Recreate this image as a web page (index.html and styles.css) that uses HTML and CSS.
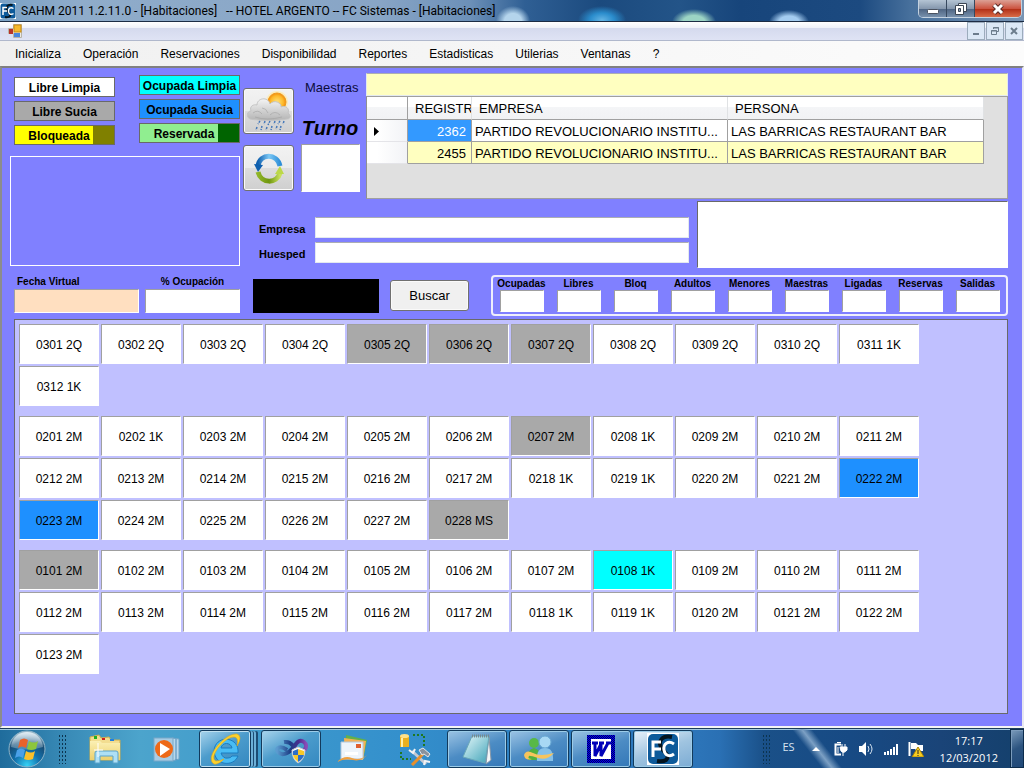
FILE: index.html
```html
<!DOCTYPE html>
<html lang="es">
<head>
<meta charset="utf-8">
<title>SAHM 2011 - Habitaciones</title>
<link rel="stylesheet" href="styles.css">
</head>
<body>
<svg class="defs" width="0" height="0" aria-hidden="true">
  <defs>
    <linearGradient id="blueArrow" x1="0" y1="0" x2="1" y2="0"><stop offset="0" stop-color="#0f5fae"/><stop offset=".5" stop-color="#7cc8f5"/><stop offset="1" stop-color="#2f8fd8"/></linearGradient>
    <linearGradient id="greenArrow" x1="0" y1="0" x2="1" y2="0"><stop offset="0" stop-color="#8fb526"/><stop offset=".5" stop-color="#6f9610"/><stop offset="1" stop-color="#c8e05a"/></linearGradient>
    <radialGradient id="sun"><stop offset="0" stop-color="#ffe27a"/><stop offset=".7" stop-color="#fdb92a"/><stop offset="1" stop-color="#f08a10"/></radialGradient>
    <linearGradient id="cloud" x1="0" y1="0" x2="0" y2="1"><stop offset="0" stop-color="#f4f4f4"/><stop offset="1" stop-color="#b4b4b4"/></linearGradient>
    <radialGradient id="orb" cx=".5" cy=".95" r=".9"><stop offset="0" stop-color="#35d2f5"/><stop offset=".4" stop-color="#1272ae"/><stop offset=".75" stop-color="#174c74"/><stop offset="1" stop-color="#9fbccd"/></radialGradient>
    <linearGradient id="shine" x1="0" y1="0" x2="0" y2="1"><stop offset="0" stop-color="#e8f2f8" stop-opacity=".9"/><stop offset="1" stop-color="#b9d2e0" stop-opacity=".3"/></linearGradient>
    <linearGradient id="folder" x1="0" y1="0" x2="0" y2="1"><stop offset="0" stop-color="#fbf0b4"/><stop offset="1" stop-color="#ecd06c"/></linearGradient>
    <linearGradient id="infinity" x1="0" y1="0" x2="1" y2="0"><stop offset="0" stop-color="#5b9bd0"/><stop offset=".45" stop-color="#1d3f86"/><stop offset=".75" stop-color="#4a2c8e"/><stop offset="1" stop-color="#8a4bb8"/></linearGradient>
    <linearGradient id="note" x1="0" y1="0" x2="1" y2="1"><stop offset="0" stop-color="#e6f8fa"/><stop offset="1" stop-color="#3fa3b8"/></linearGradient>
    <pattern id="dither" width="2" height="2" patternUnits="userSpaceOnUse"><rect width="2" height="2" fill="#0000f0"/><rect width="1" height="1" fill="#000060"/><rect x="1" y="1" width="1" height="1" fill="#000060"/></pattern>
    <symbol id="fc" viewBox="0 0 32 32"><rect width="32" height="32" fill="#fff"/><rect x="1" y="1" width="30" height="30" rx="5" fill="#0d5a9a"/><path d="M25 4C15 2 11 8 14 14s10 8 5 13q-3 2-9 1" fill="none" stroke="#04141f" stroke-width="4"/><path d="M6 24V9h8M6 16h8M27 11c-6-4-11 0-10 6s6 7 10 4" fill="none" stroke="#fff" stroke-width="3"/></symbol>
  </defs>
</svg>

<header class="titlebar">
  <svg class="title-icon" viewBox="0 0 32 32"><use href="#fc"/></svg>
  <h1 class="title">SAHM 2011 1.2.11.0 - [Habitaciones]   -- HOTEL ARGENTO -- FC Sistemas - [Habitaciones]</h1>
  <div class="window-buttons">
    <button class="win-btn" aria-label="Minimizar"><svg width="14" height="14" viewBox="0 0 14 14"><rect x="1.500" y="7.500" width="11" height="4" rx="1" fill="#fff" stroke="#4a5260"/></svg></button>
    <button class="win-btn" aria-label="Restaurar"><svg width="14" height="14" viewBox="0 0 14 14"><path d="M4.500 1.500h8v8h-8z" fill="#fff" stroke="#3c4654"/><path d="M1.500 3.500h8v9h-8z" fill="#fff" stroke="#3c4654"/><path d="M4.500 6.500h2v3h-2z" fill="#8fa2b8" stroke="#3c4654"/></svg></button>
    <button class="win-btn win-close" aria-label="Cerrar"><svg width="14" height="14" viewBox="0 0 14 14"><path d="M3 3l8 8M11 3l-8 8" stroke="#5a2a26" stroke-width="5"/><path d="M3 3l8 8M11 3l-8 8" stroke="#fff" stroke-width="3"/></svg></button>
  </div>
</header>

<div class="mdi-bar">
  <svg class="mdi-icon" width="14" height="14" viewBox="0 0 14 14"><path d="M.5 4.500h5V.5h8v13h-8v-4h-5z" fill="#eceae4" stroke="#b8b4a8"/><rect x="1" y="5" width="4" height="5" fill="#b83428"/><rect x="6" y="1" width="7" height="7" fill="#f5b92c" stroke="#c98a10"/><rect x="6" y="9" width="6" height="4" fill="#4a86dc"/></svg>
  <div class="mdi-buttons">
    <button class="mdi-btn" aria-label="Minimizar ventana"><svg width="10" height="10" viewBox="0 0 10 10"><path d="M2 8h6" stroke="#6c7c8c" stroke-width="2"/></svg></button>
    <button class="mdi-btn" aria-label="Restaurar ventana"><svg width="10" height="10" viewBox="0 0 10 10"><path d="M3.500 3V1.500h5v4H7M3 2h6M1.500 4.500h5v4h-5zM1 5h6" fill="none" stroke="#6c7c8c"/></svg></button>
    <button class="mdi-btn" aria-label="Cerrar ventana"><svg width="10" height="10" viewBox="0 0 10 10"><path d="M2 2l6 6M8 2L2 8" stroke="#6c7c8c" stroke-width="2"/></svg></button>
  </div>
</div>

<nav class="menu">
  <button>Inicializa</button><button>Operación</button><button>Reservaciones</button><button>Disponibilidad</button><button>Reportes</button><button>Estadisticas</button><button>Utilerias</button><button>Ventanas</button><button>?</button>
</nav>

<main class="workspace">
  <section class="top">
    <div class="left">
      <div class="legend">
        <div class="legend-col legend-first">
          <div class="key clean">Libre Limpia</div>
          <div class="key dirty">Libre Sucia</div>
          <div class="key blocked"><span>Bloqueada</span><i></i></div>
        </div>
        <div class="legend-col">
          <div class="key busy-clean">Ocupada Limpia</div>
          <div class="key busy-dirty">Ocupada Sucia</div>
          <div class="key reserved"><span>Reservada</span><i></i></div>
        </div>
      </div>
      <div class="frame"></div>
    </div>

    <div class="right">
      <div class="right-upper">
        <div class="tools">
          <button class="tool" aria-label="Clima"><svg width="46" height="42" viewBox="0 0 46 42"><circle cx="31" cy="12" r="11" fill="#ffe9a8" opacity=".7"/><circle cx="31" cy="12" r="9" fill="url(#sun)" stroke="#f09a1c"/><path d="M4 29c-4-2-3-8 1-8-2-5 3-7 6-6 0-7 11-9 13-1 4-5 12-1 11 3 5-2 9 2 7 6 4 3 2 6-1 6-12 2-25 2-37 0z" fill="url(#cloud)" stroke="#c4c4c4"/><path d="M7 23q5-4 9 1M16 18q4 0 6 5M24 25q5-5 10 0M9 27q12 4 27 0" fill="none" stroke="#a2a2a2" opacity=".6"/><path d="M14 31l-2 3M19 31l-1 3M24 31l-2 4M29 31l-1 3M34 31l-2 3M38 31l-1 3M11 37l-1 3M16 36l-1 4M21 37l-1 3M26 36l-1 4M31 36l-1 3M35 36l-1 4" stroke="#4477b8" stroke-width="1.500" stroke-dasharray="2 1"/></svg></button>
          <button class="tool" aria-label="Actualizar"><svg width="34" height="34" viewBox="0 0 34 34"><path d="M6 15C8 2 25 2 28 15" fill="none" stroke="url(#blueArrow)" stroke-width="5"/><path d="M2 13l9 1-5 7z" fill="#0f5fae"/><path d="M6 21c3 12 19 12 22 1" fill="none" stroke="url(#greenArrow)" stroke-width="5"/><path d="M23 23l5-8 4 8z" fill="#bcd848"/></svg></button>
        </div>
        <div class="shift">
          <label class="maestras" for="maestras">Maestras</label>
          <label class="turno" for="turno">Turno</label>
          <input id="turno" class="sunken turno-box">
        </div>
        <div class="data">
          <input id="maestras" class="filter">
          <div class="grid-view">
            <table>
              <colgroup><col class="c-mark"><col class="c-reg"><col class="c-emp"><col class="c-per"></colgroup>
              <thead><tr><th></th><th>REGISTR</th><th>EMPRESA</th><th>PERSONA</th></tr></thead>
              <tbody>
                <tr><td class="mark"><svg width="5" height="9" viewBox="0 0 5 9"><path d="M0 0l5 4.500L0 9z"/></svg></td><td class="num selected">2362</td><td>PARTIDO REVOLUCIONARIO INSTITU...</td><td>LAS BARRICAS RESTAURANT BAR</td></tr>
                <tr class="alt"><td class="mark"></td><td class="num">2455</td><td>PARTIDO REVOLUCIONARIO INSTITU...</td><td>LAS BARRICAS RESTAURANT BAR</td></tr>
              </tbody>
            </table>
          </div>
        </div>
      </div>
      <div class="right-lower">
        <div class="guest">
          <label for="empresa">Empresa</label><input id="empresa">
          <label for="huesped">Huesped</label><input id="huesped">
        </div>
        <textarea class="notes" aria-label="Notas"></textarea>
      </div>
    </div>
  </section>

  <section class="status">
    <div class="field date"><label for="fecha">Fecha Virtual</label><input id="fecha" class="sunken peach"></div>
    <div class="field percent"><label for="ocup">% Ocupación</label><input id="ocup" class="sunken"></div>
    <div class="black"></div>
    <button class="search">Buscar</button>
    <div class="totals">
      <div class="total"><label for="t1">Ocupadas</label><input id="t1" class="sunken"></div>
      <div class="total"><label for="t2">Libres</label><input id="t2" class="sunken"></div>
      <div class="total"><label for="t3">Bloq</label><input id="t3" class="sunken"></div>
      <div class="total"><label for="t4">Adultos</label><input id="t4" class="sunken"></div>
      <div class="total"><label for="t5">Menores</label><input id="t5" class="sunken"></div>
      <div class="total"><label for="t6">Maestras</label><input id="t6" class="sunken"></div>
      <div class="total"><label for="t7">Ligadas</label><input id="t7" class="sunken"></div>
      <div class="total"><label for="t8">Reservas</label><input id="t8" class="sunken"></div>
      <div class="total"><label for="t9">Salidas</label><input id="t9" class="sunken"></div>
    </div>
  </section>

  <section class="rooms">
    <div class="floor">
      <button>0301 2Q</button><button>0302 2Q</button><button>0303 2Q</button><button>0304 2Q</button><button class="dirty">0305 2Q</button><button class="dirty">0306 2Q</button><button class="dirty">0307 2Q</button><button>0308 2Q</button><button>0309 2Q</button><button>0310 2Q</button><button>0311 1K</button>
      <button>0312 1K</button>
    </div>
    <div class="floor">
      <button>0201 2M</button><button>0202 1K</button><button>0203 2M</button><button>0204 2M</button><button>0205 2M</button><button>0206 2M</button><button class="dirty">0207 2M</button><button>0208 1K</button><button>0209 2M</button><button>0210 2M</button><button>0211 2M</button>
      <button>0212 2M</button><button>0213 2M</button><button>0214 2M</button><button>0215 2M</button><button>0216 2M</button><button>0217 2M</button><button>0218 1K</button><button>0219 1K</button><button>0220 2M</button><button>0221 2M</button><button class="busy-dirty">0222 2M</button>
      <button class="busy-dirty">0223 2M</button><button>0224 2M</button><button>0225 2M</button><button>0226 2M</button><button>0227 2M</button><button class="dirty">0228 MS</button>
    </div>
    <div class="floor">
      <button class="dirty">0101 2M</button><button>0102 2M</button><button>0103 2M</button><button>0104 2M</button><button>0105 2M</button><button>0106 2M</button><button>0107 2M</button><button class="busy-clean">0108 1K</button><button>0109 2M</button><button>0110 2M</button><button>0111 2M</button>
      <button>0112 2M</button><button>0113 2M</button><button>0114 2M</button><button>0115 2M</button><button>0116 2M</button><button>0117 2M</button><button>0118 1K</button><button>0119 1K</button><button>0120 2M</button><button>0121 2M</button><button>0122 2M</button>
      <button>0123 2M</button>
    </div>
  </section>
</main>

<footer class="taskbar">
  <button class="start" aria-label="Inicio"><svg width="38" height="38" viewBox="0 0 38 38"><circle cx="19" cy="19" r="18" fill="url(#orb)" stroke="#8fb4c8"/><path d="M3 17C5-3 33-3 35 17q-16 5-32 0z" fill="url(#shine)"/><path d="M12 10q4-3 8 0l-2 8q-4-3-8 0z" fill="#e8622a"/><path d="M21 11q5 3 9 0l-2 8q-5 2-9 0z" fill="#8cc63c"/><path d="M9 20q4-3 8 0l-2 8q-4-3-8 0z" fill="#4aa0e8"/><path d="M18 21q5 3 9 0l-2 8q-5 2-9 0z" fill="#fbc02a"/></svg></button>
  <i class="grip"></i>
  <button class="task plain" aria-label="Explorador"><svg width="34" height="32" viewBox="0 0 34 32"><path d="M2 4l9-2 2 3 8-1 2 3 9 0v20H2z" fill="#f2dd90" stroke="#cfae4c"/><path d="M6 3h3v3H6z" fill="#20b020"/><path d="M14 5h3v2h-3z" fill="#d02020"/><path d="M22 6h4v2h-4z" fill="#2080e0"/><path d="M2 8h10l2 2h18v17H2z" fill="url(#folder)"/><path d="M7 30V20q0-2 2-2h19q2 0 2 2v10h-5v-7H12v7z" fill="#aee0f5" stroke="#5aa4cc"/><path d="M10 10v14M6 17h9" stroke="#fff"/></svg></button>
  <button class="task plain" aria-label="Reproductor"><svg width="30" height="30" viewBox="0 0 30 30"><path d="M20 4l7 1v20l-7 2z" fill="#b8d8ec" stroke="#6fa4c8"/><path d="M24 5v21" stroke="#4c8ab8"/><rect x="2" y="4" width="19" height="23" fill="#a8cce4" stroke="#78a8c8"/><circle cx="12" cy="15" r="9" fill="#ee6a18"/><path d="M8 9l10 6-10 7z" fill="#fff"/></svg></button>
  <button class="task stacked" aria-label="Internet Explorer"><svg width="34" height="34" viewBox="0 0 34 34"><path d="M30 21H13q2 6 7 5 3 0 4-2h6C26 35 7 34 6 19 7 3 29 4 30 18zM13 16h11c-1-6-10-6-11 0z" fill="#48bcf4" stroke="#1a7cc0"/><path d="M6 32C-4 26 16 1 29 2q6 2 0 12 2-9-3-9C16 5 0 26 8 29q4 0 8-2-6 6-10 5z" fill="#fbd22e" stroke="#e0a818" stroke-width=".6"/></svg></button>
  <button class="task" aria-label="Visual Studio"><svg width="36" height="32" viewBox="0 0 36 32"><path d="M14 17C7 12 2 15 5 19s10 2 14-3 7-11 12-7 0 12-6 8-7-9-14-8" fill="none" stroke="url(#infinity)" stroke-width="4"/><path d="M19 17l6-3 7 3q0 9-7 13-6-4-6-13z" fill="#fff" stroke="#c8ccd0"/><path d="M20 18l5-2v6h-5zM25 22h6q-1 4-6 7z" fill="#2d6fc8"/><path d="M25 16l6 2v4h-6zM20 22h5v7q-4-3-5-7z" fill="#f8c828"/></svg></button>
  <button class="task plain" aria-label="Correo"><svg width="34" height="32" viewBox="0 0 34 32"><path d="M10 2l21 5-4 20-18-4z" fill="#62b04c"/><path d="M8 5l22 3-3 19-18-1z" fill="#f5b254"/><path d="M5 9h22v17H5z" fill="#eef4fa" stroke="#b4c8dc"/><path d="M20 11h5v4h-5z" fill="#e06030"/><path d="M9 19h13v3H9z" fill="#fff"/><path d="M1 29q7-7 15-4t15-3q-6 7-14 5T1 29z" fill="#f0a040"/></svg></button>
  <button class="task plain" aria-label="Herramientas"><svg width="34" height="34" viewBox="0 0 34 34"><path d="M2 4h9v11H2z" fill="#e8b020"/><ellipse cx="6.500" cy="4" rx="4.500" ry="2" fill="#ffe288"/><path d="M4 6v9" stroke="#fff0a8" stroke-width="2"/><path d="M15 3h11v12M3 20v7h10" fill="none" stroke="#207820" stroke-width="2" stroke-dasharray="2 2"/><path d="M14 19l14 13" stroke="#c4cad4" stroke-width="3"/><path d="M11 18l4 3 2-4M26 33l1-4 5 1" fill="none" stroke="#f0f2f4" stroke-width="2"/><path d="M26 21L14 33" stroke="#e8902c" stroke-width="3"/><path d="M21 18l4-2 7 6-2 3-4-3-2 1z" fill="#8a929c" stroke="#e6e8ec"/></svg></button>
  <button class="task open" aria-label="Bloc de notas"><svg width="34" height="32" viewBox="0 0 34 32"><path d="M29 4l2 23-5 4z" fill="#f4f6f8" stroke="#8898a8"/><path d="M12 3h17l-4 27-22-6z" fill="url(#note)" stroke="#6aa8b8"/><path d="M12 3h17" stroke="#788890" stroke-width="3" stroke-dasharray="1 1"/></svg></button>
  <button class="task open" aria-label="Messenger"><svg width="34" height="32" viewBox="0 0 34 32"><circle cx="12" cy="10" r="5" fill="#58b848"/><path d="M6 27q-1-11 6-12 7 1 6 12z" fill="#50b040"/><circle cx="23" cy="9" r="6" fill="#a8d8f4" stroke="#68a8d4"/><path d="M15 28q-1-13 8-13t8 13z" fill="#84c0e8"/><path d="M2 22q2-6 9-2t21 0q-7 8-16 5t-9-2q-2 3 3 3-7 2-8-4z" fill="#f8c45c"/></svg></button>
  <button class="task open" aria-label="Word"><svg width="28" height="28" viewBox="0 0 28 28"><rect width="28" height="28" fill="url(#dither)"/><rect x="4" y="4" width="20" height="20" fill="#fff"/><path d="M5 8h6M12 8h5M19 8h5M8 8v13l6-12v12l7-13" fill="none" stroke="#0000b8" stroke-width="3"/></svg></button>
  <button class="task open active" aria-label="FC Sistemas"><svg width="32" height="32" viewBox="0 0 32 32"><use href="#fc"/></svg></button>
  <div class="tray">
    <i class="grip"></i>
    <span class="lang">ES</span>
    <svg class="chevron" width="8" height="4" viewBox="0 0 8 4"><path d="M4 0l4 4H0z" fill="#fff"/></svg>
    <svg width="16" height="16" viewBox="0 0 16 16"><path d="M8 3.500H2.500v10H8" fill="none" stroke="#fff" stroke-width="2"/><path d="M4 1.500h4M5 6v6" stroke="#fff" fill="none"/><path d="M7 6h7v3q-3 4-6 1zM9 3v3M12 3v3M10 10v5" fill="#fff" stroke="#fff"/></svg>
    <svg width="16" height="16" viewBox="0 0 16 16"><path d="M1 5h3l4-4v14l-4-4H1z" fill="#fff"/><path d="M10 5q2 3 0 6M12 3q4 5 0 10" fill="none" stroke="#dce8f4"/></svg>
    <svg width="16" height="12" viewBox="0 0 16 12"><path d="M1 9h2v3H1zM4 8h2v4H4zM7 6h2v6H7zM10 4h2v8h-2zM13 1h2v11h-2z" fill="#fff"/></svg>
    <svg width="16" height="16" viewBox="0 0 16 16"><path d="M1.500 1v14" stroke="#fff" stroke-width="2"/><path d="M3 2h5l2 2h5v6H9L7 8H3z" fill="#fff"/><path d="M10 6l6 10H4z" fill="#f8cc20" stroke="#a88408"/><path d="M10 9v4M10 14v1" stroke="#222"/></svg>
    <time class="clock">17:17<br>12/03/2012</time>
    <button class="show-desktop" aria-label="Mostrar escritorio"></button>
  </div>
</footer>
</body>
</html>
```
FILE: styles.css
```css
* { box-sizing: border-box; }
body {
  margin: 0;
  min-height: 100vh;
  display: flex;
  flex-direction: column;
  font-family: "Liberation Sans", Arial, sans-serif;
  font-size: 12px;
  color: #000;
  background: #8080ff;
}
button, input, textarea { font: inherit; color: inherit; margin: 0; padding: 0; border-radius: 0; }
input { min-width: 0; }
.defs { position: absolute; }
svg { display: block; flex: none; }

/* Title bar */
.titlebar {
  display: flex;
  align-items: flex-start;
  height: 22px;
  padding-right: 2px;
  border-bottom: 1px solid #1c2c44;
  background:
    radial-gradient(ellipse 17px 15px at 513px 21px, #b4d4ec 50%, transparent),
    radial-gradient(ellipse 24px 14px at 602px 20px, #64b4e4, #2a8ccc 50%, transparent),
    radial-gradient(ellipse 22px 13px at 694px 22px, #9cd4c4 50%, transparent),
    radial-gradient(ellipse 20px 12px at 789px 22px, #a4ccf0 50%, transparent),
    linear-gradient(90deg, #7ba2c6 0, #8facca 80px, #88a5c6 380px, #6c90b8 470px, #2f5f94 525px, #1b4a7e 600px, #235488 680px, #17457b 740px, #1c4a80 860px, #47709c 910px, #7894b4 100%);
}
.title-icon { width: 16px; height: 16px; margin-top: 3px; }
.title { flex: 1; margin: 0 0 0 5px; font: 12px/22px Roboto, "Noto Sans", sans-serif; white-space: pre; }
.window-buttons { display: flex; border: 1px solid #c4d2e0; border-top: 0; border-radius: 0 0 5px 5px; overflow: hidden; }
.win-btn {
  display: grid; place-items: center;
  width: 28px; height: 17px;
  border: 0; border-right: 1px solid #36485e;
  background: linear-gradient(#b4c4d4, #8698ae 50%, #4c6280 51%, #7890ac);
}
.win-close { width: 46px; border-right: 0; background: linear-gradient(#dca094, #cc5440 50%, #b02c14 51%, #d86c48); }

/* Child window bar */
.mdi-bar {
  display: flex; align-items: center; justify-content: space-between;
  height: 19px;
  padding: 0 1px 0 8px;
  border-bottom: 1px solid #b0b8cc;
  background: linear-gradient(#fff, #eef0f8 35%, #d5daee 36%, #dfe3f4);
}
.mdi-buttons { display: flex; gap: 1px; }
.mdi-btn { display: grid; place-items: center; width: 18px; height: 18px; border: 1px solid #9cacbc; background: #dce8f6; }

.menu { display: flex; gap: 22px; height: 25px; padding: 0 15px; background: linear-gradient(90deg, #f0f0f0, #fcfcfc); }
.menu button { border: 0; background: none; }

/* Workspace */
.workspace {
  flex: 1;
  display: flex; flex-direction: column;
  padding: 5px 14px 12px 8px;
  border: 2px solid;
  border-color: #808080 #e8e8f0 #f4f4f4 #8c8c8c;
  background: #8080ff;
}
.top { display: flex; gap: 3px; }
.left { width: 230px; padding-top: 2px; }
.legend { display: flex; justify-content: space-between; padding-left: 4px; }
.legend-col { display: flex; flex-direction: column; gap: 4px; width: 101px; }
.legend-first { padding-top: 2px; }
.key { display: flex; justify-content: center; height: 20px; border: 1px solid #696969; font-weight: bold; line-height: 20px; white-space: nowrap; }
.key span { flex: 1; padding-left: 10px; text-align: center; }
.key i { width: 21px; }
.clean { background: #fff; }
.dirty { background: #a9a9a9; }
.blocked { background: #ff0; }
.blocked i { background: #808000; }
.busy-clean { background: #0ff; }
.busy-dirty { background: #1e90ff; }
.reserved { background: #90ee90; }
.reserved i { background: #006400; }
.frame { height: 110px; margin-top: 11px; border: 1px solid #fff; }

.right { flex: 1; min-width: 0; display: flex; flex-direction: column; gap: 2px; }
.right-upper { display: flex; height: 126px; }
.tools { display: flex; flex-direction: column; gap: 11px; padding-top: 15px; }
.tool, .search {
  display: grid; place-items: center;
  border: 1px solid #707070; border-radius: 3px;
  box-shadow: inset 0 0 0 1px #fafafa;
  background: linear-gradient(#f2f2f2, #ebebeb 50%, #dddddd 51%, #cfcfcf);
}
.tool { width: 51px; height: 46px; }
.shift { display: flex; flex-direction: column; width: 58px; margin: 0 7px; }
.maestras { padding: 7px 0 0 4px; color: #0c0c3c; font-size: 13px; line-height: 16px; white-space: nowrap; }
.turno { margin-top: 19px; font-size: 20px; line-height: 26px; font-weight: bold; font-style: italic; text-align: center; }
.turno-box { width: 59px; height: 48px; margin-top: 3px; }
.sunken { border: 1px solid #fff; border-top-color: #a0a0a0; border-left-color: #a0a0a0; background: #fff; }
.data { flex: 1; min-width: 0; display: flex; flex-direction: column; }
.filter { height: 23px; border: 1px solid #e3e9ef; border-top-color: #abadb3; background: #ffffc0; }
.grid-view { flex: 1; border: 1px solid #a0a0a0; border-left-color: #909090; background: #e0e0e0; overflow: hidden; }
table { width: 617px; border-collapse: separate; border-spacing: 0; table-layout: fixed; font-size: 13px; }
.c-mark { width: 41px; }
.c-reg { width: 64px; }
.c-emp { width: 256px; }
.c-per { width: 256px; }
th, td { height: 22px; padding: 0 0 0 3px; overflow: hidden; white-space: nowrap; text-align: left; font-weight: normal; border: 0 solid #a0a0a0; border-width: 0 1px 1px 0; }
th { height: 23px; padding-left: 7px; border-right-color: #e0e2e4; background: linear-gradient(#fff 45%, #f4f5f7 46%, #f1f2f4); }
th:first-child, .mark { border-right-color: #a0a0a0; }
td { padding-top: 1px; background: #fff; }
.alt td { background: #ffffc0; }
.num { padding: 1px 5px 0 0; text-align: right; }
.num.selected { background: #3399ff; color: #fff; }
td.mark, .alt td.mark { padding-left: 7px; border-bottom-color: #e4e4e8; background: linear-gradient(90deg, #fff 25%, #f2f3f6); }

.right-lower { display: flex; gap: 8px; padding-left: 16px; }
.guest { flex: 1; display: grid; grid-template-columns: 56px 1fr; grid-auto-rows: 21px; row-gap: 4px; align-items: center; padding-top: 16px; }
.guest label { padding-top: 3px; }
.guest label, .field label, .total label { font-weight: bold; white-space: nowrap; }
.guest label { font-size: 11px; }
.guest input { height: 21px; border: 1px solid #e3e9ef; border-top-color: #abadb3; background: #fff; }
.notes { width: 311px; height: 67px; border: 1px solid #fff; border-top-color: #696969; border-left-color: #696969; background: #fff; resize: none; }

/* Status strip */
.status { display: flex; margin: 7px 0 3px 4px; height: 41px; }
.field { display: flex; flex-direction: column; height: 38px; }
.field label { font-size: 10px; line-height: 14px; padding-left: 3px; }
.field input { height: 24px; }
.date { width: 125px; }
.percent { width: 95px; margin-left: 6px; }
.percent label { padding: 0; text-align: center; }
.peach { background: #ffdfc0; }
.black { width: 126px; height: 34px; margin: 4px 0 0 13px; background: #000; }
.search { width: 79px; height: 31px; margin: 5px 22px 0 11px; background: #f0f0f0; font-size: 13px; }
.totals { flex: 1; display: grid; grid-template-columns: repeat(9, 1fr); border: 2px solid #eeeefc; border-radius: 4px; }
.total { display: flex; flex-direction: column; align-items: center; }
.total label { font-size: 10px; line-height: 13px; }
.total input { width: 44px; height: 22px; }

/* Rooms */
.rooms { flex: 1; display: flex; flex-direction: column; gap: 10px; margin-left: 4px; padding: 4px; border: 1px solid #696969; background: #c0c0ff; }
.floor { display: grid; grid-template-columns: repeat(11, 80px); grid-auto-rows: 40px; gap: 2px; }
.floor button { padding-top: 2px; border: 1px solid #fff; border-top-color: #a0a0a0; border-left-color: #a0a0a0; background: #fff; }
.floor .dirty { background: #a9a9a9; }
.floor .busy-dirty { background: #1e90ff; }
.floor .busy-clean { background: #0ff; }

/* Taskbar */
.taskbar {
  display: flex; align-items: center;
  height: 40px;
  border-top: 1px solid #1c3c5c;
  box-shadow: inset 0 1px 0 #a4c8e0;
  background: linear-gradient(90deg, #1f6c9c 0, #3a8cb8 70px, #4ca4cc 140px, #3c98cc 280px, #3490cc 400px, #2c7cc0 560px, #2c74b8 700px, #2a70b4 720px, #1a5088 765px, #174a84 850px, #1a4478 940px, #14406c 100%);
}
.start { width: 38px; height: 38px; margin-left: 8px; border: 0; border-radius: 50%; background: none; }
.grip { width: 9px; height: 30px; background: radial-gradient(circle, #0c3450 1px, transparent 1px) 0 0 / 3px 4px; }
.start + .grip { margin: 0 8px 0 12px; }
.task { display: grid; place-items: center; flex: none; width: 60px; height: 38px; margin-right: 2px; border: 1px solid #123a5c; border-radius: 3px; box-shadow: inset 0 0 0 1px #9ccce8; background: linear-gradient(150deg, #a8d4ec, #4c9ccc 45%, #3488c0); }
.task.plain { border: 0; box-shadow: none; background: none; }
.task.stacked { width: 52px; margin-right: 10px; box-shadow: inset 0 0 0 1px #bfe0f0, 3px 0 0 -1px #6cb0d8, 4px 0 0 -1px #1c4c74, 6px 0 0 -1px #6cb0d8, 8px 0 0 -1px #1c4c74; }
.task.open { background: linear-gradient(160deg, #9cc4e4, #4c8cc4 50%, #3478b8); }
.task.active { background: linear-gradient(160deg, #e8f2fa, #a0c4e0 50%, #7cacd4); }
.tray { flex: 1; display: flex; align-items: center; justify-content: flex-end; gap: 9px; height: 100%; color: #fff; font-family: "Open Sans", "Noto Sans", sans-serif; background: linear-gradient(52deg, transparent 100px, #7ca0c4 108px, transparent 116px); }
.tray .grip { margin-right: 2px; }
.lang { color: #d8e4f0; font-size: 11px; line-height: 18px; padding-bottom: 4px; }
.chevron { margin: 0 4px 0 8px; }
.clock { padding: 0 3px 0 7px; font-size: 11px; text-align: center; line-height: 17px; }
.show-desktop { width: 14px; height: 100%; border: 1px solid #0c2c4c; box-shadow: inset 1px 1px 0 #7c9cbc; background: linear-gradient(150deg, #7c9cbc, #2c5480 50%, #204878); }
```
